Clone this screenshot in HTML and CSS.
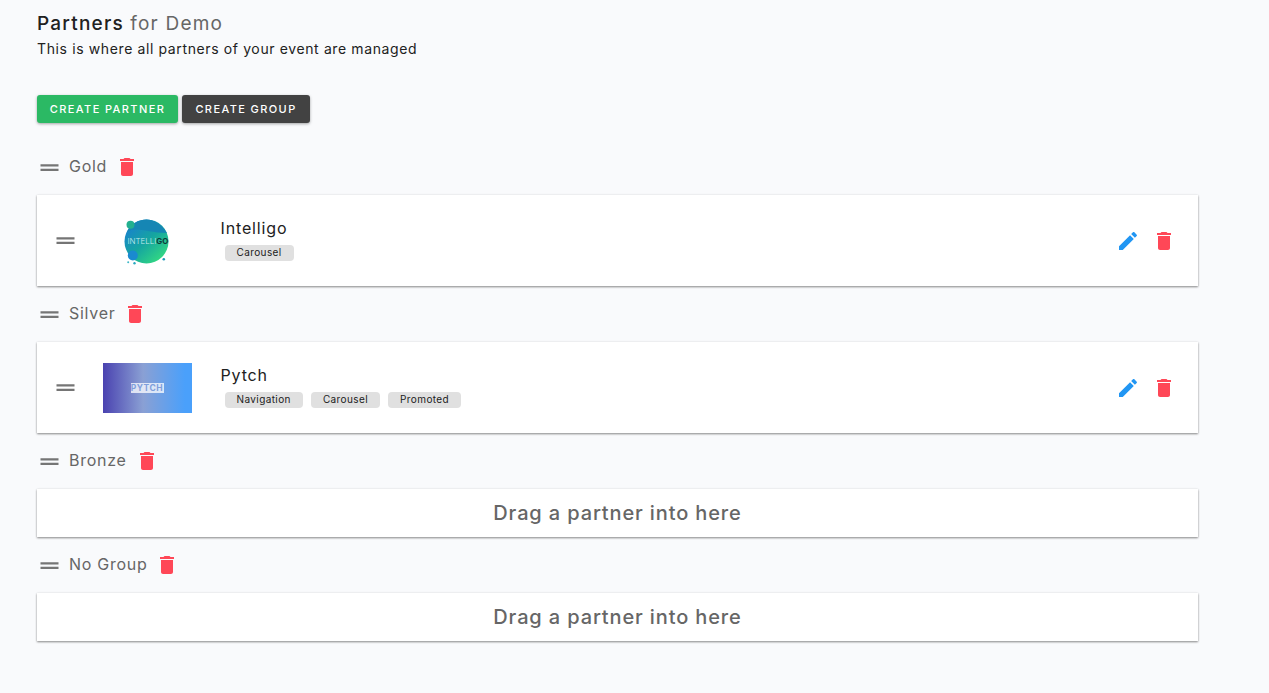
FILE: index.html
```html
<!DOCTYPE html>
<html lang="en">
<head>
<meta charset="utf-8">
<title>Partners for Demo</title>
<link rel="stylesheet" href="styles.css">
</head>
<body>
<svg class="defs" width="0" height="0" aria-hidden="true">
  <defs>
    <symbol id="i-drag" viewBox="0 0 24 24"><path d="M20 9H4v2h16V9zM4 15h16v-2H4v2z"/></symbol>
    <symbol id="i-trash" viewBox="0 0 24 24"><path d="M6 19c0 1.1.9 2 2 2h8c1.1 0 2-.9 2-2V7H6v12zM19 4h-3.5l-1-1h-5l-1 1H5v2h14V4z"/></symbol>
    <symbol id="i-edit" viewBox="0 0 24 24"><path d="M3 17.25V21h3.75L17.81 9.94l-3.75-3.75L3 17.25zM20.71 7.04c.39-.39.39-1.02 0-1.41l-2.34-2.34c-.39-.39-1.02-.39-1.41 0l-1.83 1.83 3.75 3.75 1.83-1.83z"/></symbol>
    <linearGradient id="g-intelligo" x1="0.1" y1="0.1" x2="0.85" y2="0.95">
      <stop offset="0" stop-color="#1a7fd0"/><stop offset=".5" stop-color="#15a5a0"/><stop offset="1" stop-color="#35dc80"/>
    </linearGradient>
  </defs>
</svg>
<main class="page">
  <header class="head">
    <h1 class="title">Partners <span class="title-sub">for Demo</span></h1>
    <p class="subtitle">This is where all partners of your event are managed</p>
  </header>
  <div class="actions">
    <button class="btn btn-green">Create Partner</button>
    <button class="btn btn-dark">Create Group</button>
  </div>

  <section class="group">
    <div class="group-head">
      <svg class="icon drag"><use href="#i-drag"/></svg>
      <span class="group-name">Gold</span>
      <svg class="icon trash"><use href="#i-trash"/></svg>
    </div>
    <article class="card">
      <svg class="icon drag"><use href="#i-drag"/></svg>
      <div class="logo">
        <svg class="logo-round" viewBox="0 0 50 50" width="50" height="50">
          <circle cx="24.500" cy="25.400" r="22" fill="url(#g-intelligo)"/>
          <path d="M5 16C14 10 26 17 45 17C40 8 31 3.500 24.500 3.500C16 3.500 8 9 5 16Z" fill="#1686b4"/>
          <circle cx="8.500" cy="8.800" r="4" fill="#22b08f"/>
          <circle cx="10.800" cy="39.500" r="5" fill="#1a8ad0"/>
          <circle cx="6.200" cy="46.200" r="1" fill="#3fb8c8"/>
          <circle cx="12.500" cy="47.200" r="1.200" fill="#2aa8c0"/>
          <circle cx="41.800" cy="43.200" r="1.300" fill="#1c9ab8"/>
          <text class="logo-text" x="5.500" y="27.800">INTELLI<tspan class="logo-dark">GO</tspan></text>
        </svg>
      </div>
      <div class="info">
        <div class="name">Intelligo</div>
        <div class="chips"><span class="chip">Carousel</span></div>
      </div>
      <div class="card-actions">
        <svg class="icon edit"><use href="#i-edit"/></svg>
        <svg class="icon trash"><use href="#i-trash"/></svg>
      </div>
    </article>
  </section>

  <section class="group">
    <div class="group-head">
      <svg class="icon drag"><use href="#i-drag"/></svg>
      <span class="group-name">Silver</span>
      <svg class="icon trash"><use href="#i-trash"/></svg>
    </div>
    <article class="card">
      <svg class="icon drag"><use href="#i-drag"/></svg>
      <div class="logo">
        <div class="logo-pytch"><span class="pytch-text">PYTCH</span></div>
      </div>
      <div class="info">
        <div class="name">Pytch</div>
        <div class="chips">
          <span class="chip">Navigation</span>
          <span class="chip">Carousel</span>
          <span class="chip">Promoted</span>
        </div>
      </div>
      <div class="card-actions">
        <svg class="icon edit"><use href="#i-edit"/></svg>
        <svg class="icon trash"><use href="#i-trash"/></svg>
      </div>
    </article>
  </section>

  <section class="group">
    <div class="group-head">
      <svg class="icon drag"><use href="#i-drag"/></svg>
      <span class="group-name">Bronze</span>
      <svg class="icon trash"><use href="#i-trash"/></svg>
    </div>
    <div class="empty">Drag a partner into here</div>
  </section>

  <section class="group">
    <div class="group-head">
      <svg class="icon drag"><use href="#i-drag"/></svg>
      <span class="group-name">No Group</span>
      <svg class="icon trash"><use href="#i-trash"/></svg>
    </div>
    <div class="empty">Drag a partner into here</div>
  </section>
</main>
</body>
</html>
```
FILE: styles.css
```css
* { box-sizing: border-box; }
html, body { margin: 0; padding: 0; }
body {
  height: 693px;
  overflow: hidden;
  background: #f9fafc;
  font-family: Inter, "Noto Sans", sans-serif;
  color: #212121;
}
.defs { position: absolute; }
.page {
  width: 1198px;
  padding: 10px 0 0 37px;
  display: flex;
  flex-direction: column;
}
.head { height: 85px; }
.title {
  margin: 0;
  font-size: 19px;
  font-weight: 500;
  line-height: 27px;
  letter-spacing: 1.22px;
}
.title-sub { color: #666; font-weight: 400; }
.subtitle {
  margin: 2px 0 0;
  font-size: 14px;
  line-height: 20px;
  letter-spacing: 0.62px;
}
.actions { display: flex; gap: 4px; height: 28px; margin-bottom: 28px; }
.btn {
  border: 0;
  border-radius: 3px;
  height: 28px;
  padding: 0;
  white-space: nowrap;
  font: 500 11px Inter, sans-serif;
  letter-spacing: 1.4px;
  text-transform: uppercase;
  color: #fff;
  box-shadow: 0 1px 3px rgba(0,0,0,.35);
}
.btn-green { background: #2bb964; width: 141px; }
.btn-dark { background: #424242; width: 128px; }
.group { display: flex; flex-direction: column; }
.group-head {
  display: flex;
  align-items: center;
  height: 32px;
  margin-bottom: 12px;
}
.group-name {
  margin: 0 0 2px 6.500px;
  font-size: 16px;
  line-height: 28px;
  letter-spacing: 0.72px;
  color: #666;
}
.icon { display: block; flex: none; width: 24px; height: 24px; }
.drag { width: 27px; height: 27px; margin-left: -1.500px; fill: #757575; }
.trash { fill: #ff4757; }
.edit { fill: #2196f3; }
.group-head .trash { margin-left: 8px; }
.card {
  display: flex;
  align-items: center;
  height: 91px;
  margin-bottom: 12px;
  padding: 0 22px 0 16.500px;
  background: #fff;
  box-shadow: 0 1px 2px rgba(0,0,0,.45), 0 0 3px rgba(0,0,0,.05);
}
.logo { width: 89px; height: 50px; margin-left: 23.500px; display: flex; justify-content: center; }
.logo-round { display: block; }
.logo-text { font: 300 7.900px Inter, sans-serif; fill: #c4ecec; }
.logo-dark { font-weight: 700; fill: #0d3b3a; }
.logo-pytch {
  width: 89px;
  height: 50px;
  background: linear-gradient(90deg, #4a42b0 0%, #8aa0d4 45%, #4aa0fb 92%);
  display: flex;
  align-items: center;
  justify-content: center;
}
.pytch-text {
  width: 33px;
  text-align: center;
  background: rgba(255,255,255,.75);
  color: #7f9fdc;
  font-size: 8.500px;
  font-weight: 700;
  line-height: 10px;
  letter-spacing: .5px;
}
.info { margin-left: 29px; display: flex; flex-direction: column; }
.name { font-size: 16px; line-height: 22px; letter-spacing: 0.85px; }
.chips { display: flex; gap: 8px; padding: 0 0 3px 4px; margin-top: 6px; }
.chip {
  height: 16px;
  padding: 0 12px;
  border-radius: 4px;
  background: #e0e0e0;
  font-size: 10px;
  line-height: 15px;
  letter-spacing: 0.4px;
}
.card-actions { margin-left: auto; display: flex; gap: 12px; }
.empty {
  height: 48px;
  margin-bottom: 12px;
  background: #fff;
  box-shadow: 0 1px 2px rgba(0,0,0,.45), 0 0 3px rgba(0,0,0,.05);
  text-align: center;
  font-size: 20px;
  font-weight: 500;
  line-height: 48px;
  letter-spacing: 0.87px;
  color: #666;
}
```
